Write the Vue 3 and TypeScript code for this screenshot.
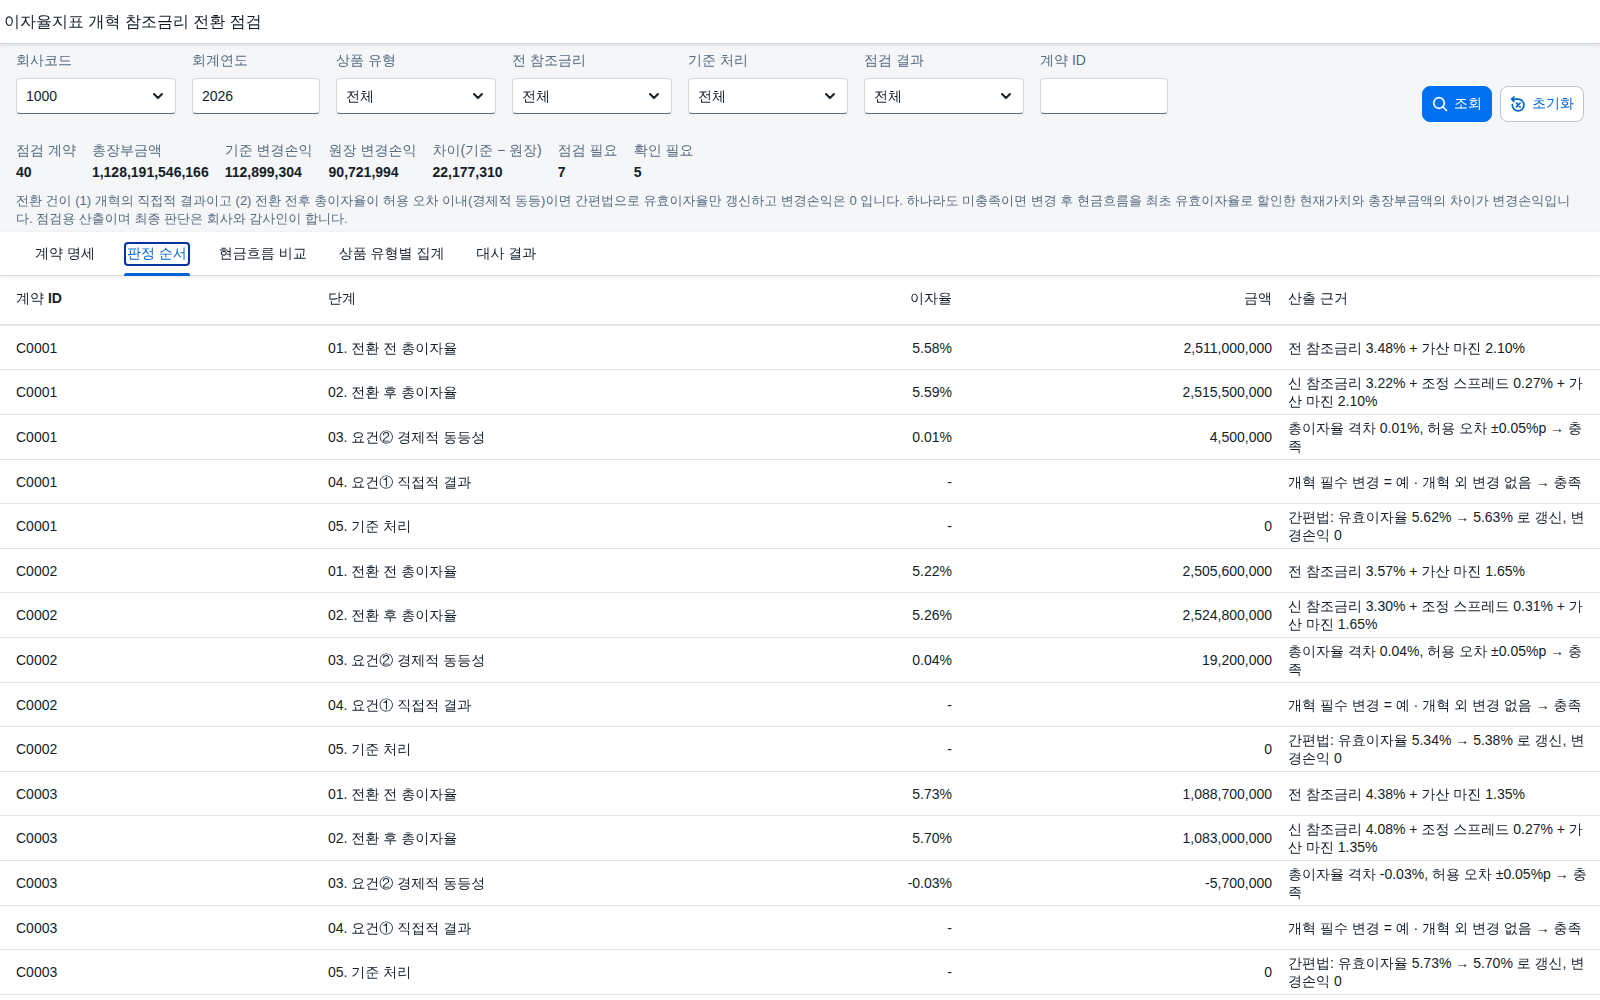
<script setup lang="ts">
import { ref } from 'vue'

interface Field { id: string; label: string; kind: 'select' | 'input'; value: string }
interface Step { id: string; step: string; rate: string; amount: string; basis: string }

const fields = ref<Field[]>([
  { id: 'company', label: '회사코드', kind: 'select', value: '1000' },
  { id: 'year', label: '회계연도', kind: 'input', value: '2026' },
  { id: 'product', label: '상품 유형', kind: 'select', value: '전체' },
  { id: 'benchmark', label: '전 참조금리', kind: 'select', value: '전체' },
  { id: 'treatment', label: '기준 처리', kind: 'select', value: '전체' },
  { id: 'result', label: '점검 결과', kind: 'select', value: '전체' },
  { id: 'contract', label: '계약 ID', kind: 'input', value: '' },
])

const totals = [
  { label: '점검 계약', value: '40' },
  { label: '총장부금액', value: '1,128,191,546,166' },
  { label: '기준 변경손익', value: '112,899,304' },
  { label: '원장 변경손익', value: '90,721,994' },
  { label: '차이(기준 − 원장)', value: '22,177,310' },
  { label: '점검 필요', value: '7' },
  { label: '확인 필요', value: '5' },
]

const tabs = ['계약 명세', '판정 순서', '현금흐름 비교', '상품 유형별 집계', '대사 결과']
const active = ref(1)

function contractSteps(
  id: string,
  before: [string, string, string],
  after: [string, string, string, string],
  margin: string,
  gap: [string, string],
  eir: [string, string],
): Step[] {
  return [
    { id, step: '01. 전환 전 총이자율', rate: before[0], amount: before[1], basis: `전 참조금리 ${before[2]} + 가산 마진 ${margin}` },
    { id, step: '02. 전환 후 총이자율', rate: after[0], amount: after[1], basis: `신 참조금리 ${after[2]} + 조정 스프레드 ${after[3]} + 가산 마진 ${margin}` },
    { id, step: '03. 요건② 경제적 동등성', rate: gap[0], amount: gap[1], basis: `총이자율 격차 ${gap[0]}, 허용 오차 ±0.05%p → 충족` },
    { id, step: '04. 요건① 직접적 결과', rate: '-', amount: '', basis: '개혁 필수 변경 = 예 · 개혁 외 변경 없음 → 충족' },
    { id, step: '05. 기준 처리', rate: '-', amount: '0', basis: `간편법: 유효이자율 ${eir[0]} → ${eir[1]} 로 갱신, 변경손익 0` },
  ]
}

const rows: Step[] = [
  ...contractSteps('C0001', ['5.58%', '2,511,000,000', '3.48%'], ['5.59%', '2,515,500,000', '3.22%', '0.27%'], '2.10%', ['0.01%', '4,500,000'], ['5.62%', '5.63%']),
  ...contractSteps('C0002', ['5.22%', '2,505,600,000', '3.57%'], ['5.26%', '2,524,800,000', '3.30%', '0.31%'], '1.65%', ['0.04%', '19,200,000'], ['5.34%', '5.38%']),
  ...contractSteps('C0003', ['5.73%', '1,088,700,000', '4.38%'], ['5.70%', '1,083,000,000', '4.08%', '0.27%'], '1.35%', ['-0.03%', '-5,700,000'], ['5.73%', '5.70%']),
]
</script>

<template>
  <div class="page">
    <header class="bar"><h1>이자율지표 개혁 참조금리 전환 점검</h1></header>

    <section class="head">
      <form class="filters" @submit.prevent>
        <div v-for="f in fields" :key="f.id" class="field" :class="f.kind">
          <label :for="f.id">{{ f.label }}</label>
          <div class="control">
            <select v-if="f.kind === 'select'" :id="f.id" v-model="f.value">
              <option>{{ f.value }}</option>
            </select>
            <input v-else :id="f.id" v-model="f.value" type="text" />
            <svg v-if="f.kind === 'select'" class="arrow" viewBox="0 0 16 16" aria-hidden="true">
              <path d="M4 6l4 4 4-4" />
            </svg>
          </div>
        </div>
        <div class="actions">
          <button type="submit" class="primary">
            <svg viewBox="0 0 16 16" aria-hidden="true">
              <circle cx="7" cy="7" r="5.300" />
              <path d="M11 11l3.500 3.500" />
            </svg>
            조회
          </button>
          <button type="reset">
            <svg viewBox="0 0 16 16" aria-hidden="true">
              <path d="M2 3.200h6.200a5.800 5.800 0 1 1-5.900 5.400" />
              <path d="M4 1L1.800 3.200 4 5.400" />
              <path d="M6.500 7.200l3.600 3.600M10.100 7.200l-3.600 3.600" />
            </svg>
            초기화
          </button>
        </div>
      </form>

      <dl class="totals">
        <div v-for="t in totals" :key="t.label">
          <dt>{{ t.label }}</dt>
          <dd>{{ t.value }}</dd>
        </div>
      </dl>

      <p class="note">
        전환 건이 (1) 개혁의 직접적 결과이고 (2) 전환 전후 총이자율이 허용 오차 이내(경제적 동등)이면 간편법으로 유효이자율만 갱신하고 변경손익은 0 입니다. 하나라도 미충족이면 변경 후 현금흐름을 최초 유효이자율로 할인한 현재가치와 총장부금액의 차이가 변경손익입니다. 점검용 산출이며 최종 판단은 회사와 감사인이 합니다.
      </p>
    </section>

    <nav class="tabs" role="tablist">
      <button
        v-for="(t, i) in tabs"
        :key="t"
        type="button"
        role="tab"
        :aria-selected="i === active"
        :class="{ on: i === active }"
        @click="active = i"
      >
        <span>{{ t }}</span>
      </button>
    </nav>

    <table>
      <thead>
        <tr>
          <th scope="col">계약 <b>ID</b></th>
          <th scope="col">단계</th>
          <th scope="col" class="num">이자율</th>
          <th scope="col" class="num">금액</th>
          <th scope="col">산출 근거</th>
        </tr>
      </thead>
      <tbody>
        <tr v-for="r in rows" :key="r.id + r.step">
          <td>{{ r.id }}</td>
          <td>{{ r.step }}</td>
          <td class="num">{{ r.rate }}</td>
          <td class="num">{{ r.amount }}</td>
          <td>{{ r.basis }}</td>
        </tr>
      </tbody>
    </table>
  </div>
</template>

<style>
body {
  background: #fff;
}
</style>

<style scoped>
.page,
.page button,
.page input,
.page select {
  font-family: "Liberation Sans", "WenQuanYi Zen Hei", sans-serif;
  font-size: 14px;
  font-weight: 400;
  color: #131e29;
}
.page * {
  box-sizing: border-box;
}
.page {
  line-height: 18px;
}
svg {
  width: 16px;
  height: 16px;
  fill: none;
  stroke: currentColor;
  stroke-width: 1.7;
  stroke-linecap: round;
  stroke-linejoin: round;
}
.bar {
  position: relative;
  display: flex;
  align-items: center;
  height: 43px;
  padding: 0 4px;
  background: #fff;
  box-shadow: 0 1px 0 #d3d7da, 0 2px 4px rgba(85, 107, 130, 0.2);
}
h1 {
  margin: 0;
  font-size: 16px;
  font-weight: 400;
}
.head {
  padding: 8px 16px 4px;
  background: #f5f6f7;
}
.filters {
  display: flex;
  gap: 16px;
}
.field {
  display: flex;
  flex-direction: column;
  gap: 9px;
  width: 128px;
}
.field.select {
  width: 160px;
}
label,
dt {
  color: #556b82;
}
.control {
  position: relative;
}
.control input,
.control select {
  display: block;
  width: 100%;
  height: 36px;
  padding: 0 9px;
  appearance: none;
  background: #fff;
  border: 1px solid #d0d6dc;
  border-bottom-color: #556b82;
  border-radius: 4px;
}
.arrow {
  position: absolute;
  top: 10px;
  right: 10px;
  stroke-width: 2;
  pointer-events: none;
}
.actions {
  display: flex;
  gap: 8px;
  margin-left: auto;
  padding-top: 35px;
}
.actions button {
  display: flex;
  align-items: center;
  gap: 6px;
  height: 36px;
  padding: 0 9px;
  color: #0064d9;
  background: #fff;
  border: 1px solid #bcc3ca;
  border-radius: 8px;
}
.actions .primary {
  color: #fff;
  background: #0070f2;
  border-color: #0070f2;
}
.totals {
  display: flex;
  gap: 16px;
  margin: 19px 0 11px;
}
dt {
  margin-bottom: 4px;
}
dd {
  margin: 0;
  font-weight: 700;
}
.note {
  margin: 0;
  font-size: 13px;
  color: #556b82;
}
.tabs {
  display: flex;
  gap: 26px;
  height: 44px;
  padding: 0 32px;
  border-bottom: 1px solid #d9d9d9;
  box-shadow: 0 1px 3px rgba(85, 107, 130, 0.14);
}
.tabs button {
  position: relative;
  padding: 0;
  background: none;
  border: 0;
}
.tabs span {
  display: block;
  padding: 1px;
  border: 2px solid transparent;
  border-radius: 4px;
}
.tabs .on span {
  color: #0064d9;
  border-color: #0032a5;
}
.tabs .on::after {
  content: "";
  position: absolute;
  right: 0;
  bottom: -1px;
  left: 0;
  height: 3px;
  background: #0064d9;
  border-radius: 2px 2px 0 0;
}
table {
  width: 100%;
  table-layout: fixed;
  border-collapse: separate;
  border-spacing: 0;
}
th,
td {
  height: 44px;
  padding: 4px 8px;
  text-align: left;
  border-bottom: 1px solid #e5e5e5;
}
th {
  height: 50px;
  padding-bottom: 8px;
  font-weight: 400;
  border-bottom-width: 2px;
}
th b {
  font-weight: 700;
}
th:first-child,
td:first-child {
  padding-left: 16px;
}
.num {
  text-align: right;
}
</style>
